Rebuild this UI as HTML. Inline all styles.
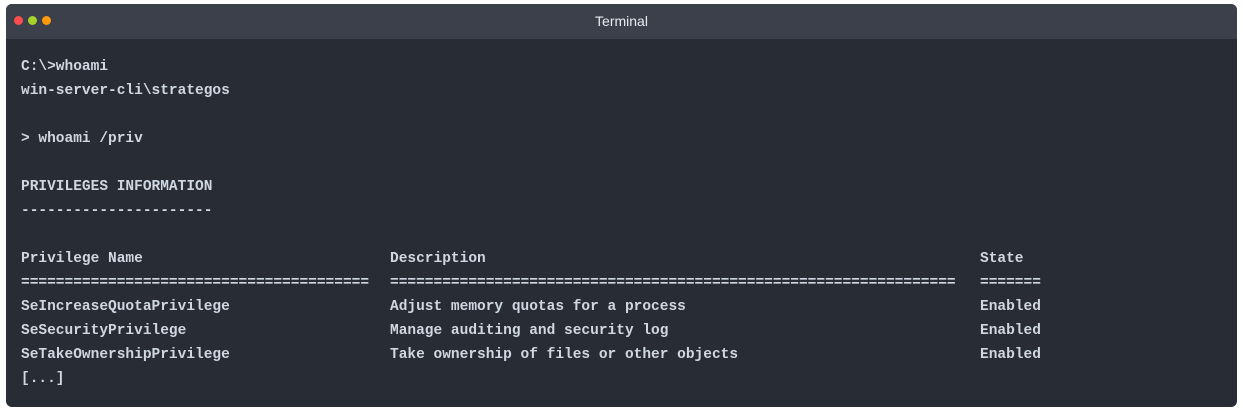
<!DOCTYPE html>
<html><head><meta charset="utf-8"><style>
html,body{margin:0;padding:0;background:#fff;width:1243px;height:412px;overflow:hidden}
.win{position:absolute;left:6px;top:4px;width:1231px;height:403px;background:#282c34;border-radius:6px;overflow:hidden}
.bar{height:35px;background:#3b404b;position:relative}
.dot{position:absolute;top:12px;width:9px;height:9px;border-radius:50%}
.t{position:absolute;left:0;right:0;top:0;text-align:center;color:#e8ecf0;font:14px/35px "Liberation Sans",sans-serif}
.body{position:relative;padding-top:16px;font:bold 14.5px/24px "Liberation Mono",monospace;color:#cfd8e2}
.l{height:24px;position:relative;white-space:pre}
.l span{position:absolute;top:0}
.a{left:15px}.b{left:384px}.c{left:974px}
</style></head><body>
<div class="win">
<div class="bar"><span class="dot" style="left:8px;background:#ff4d4d"></span><span class="dot" style="left:22px;background:#a6d12a"></span><span class="dot" style="left:36px;background:#ff9a0a"></span><div class="t">Terminal</div></div>
<div class="body">
<div class="l"><span class="a">C:\&gt;whoami</span></div>
<div class="l"><span class="a">win-server-cli\strategos</span></div>
<div class="l"></div>
<div class="l"><span class="a">&gt; whoami /priv</span></div>
<div class="l"></div>
<div class="l"><span class="a">PRIVILEGES INFORMATION</span></div>
<div class="l"><span class="a">----------------------</span></div>
<div class="l"></div>
<div class="l"><span class="a">Privilege Name</span><span class="b">Description</span><span class="c">State</span></div>
<div class="l"><span class="a">========================================</span><span class="b">=================================================================</span><span class="c">=======</span></div>
<div class="l"><span class="a">SeIncreaseQuotaPrivilege</span><span class="b">Adjust memory quotas for a process</span><span class="c">Enabled</span></div>
<div class="l"><span class="a">SeSecurityPrivilege</span><span class="b">Manage auditing and security log</span><span class="c">Enabled</span></div>
<div class="l"><span class="a">SeTakeOwnershipPrivilege</span><span class="b">Take ownership of files or other objects</span><span class="c">Enabled</span></div>
<div class="l"><span class="a">[...]</span></div>
</div>
</div>
</body></html>
